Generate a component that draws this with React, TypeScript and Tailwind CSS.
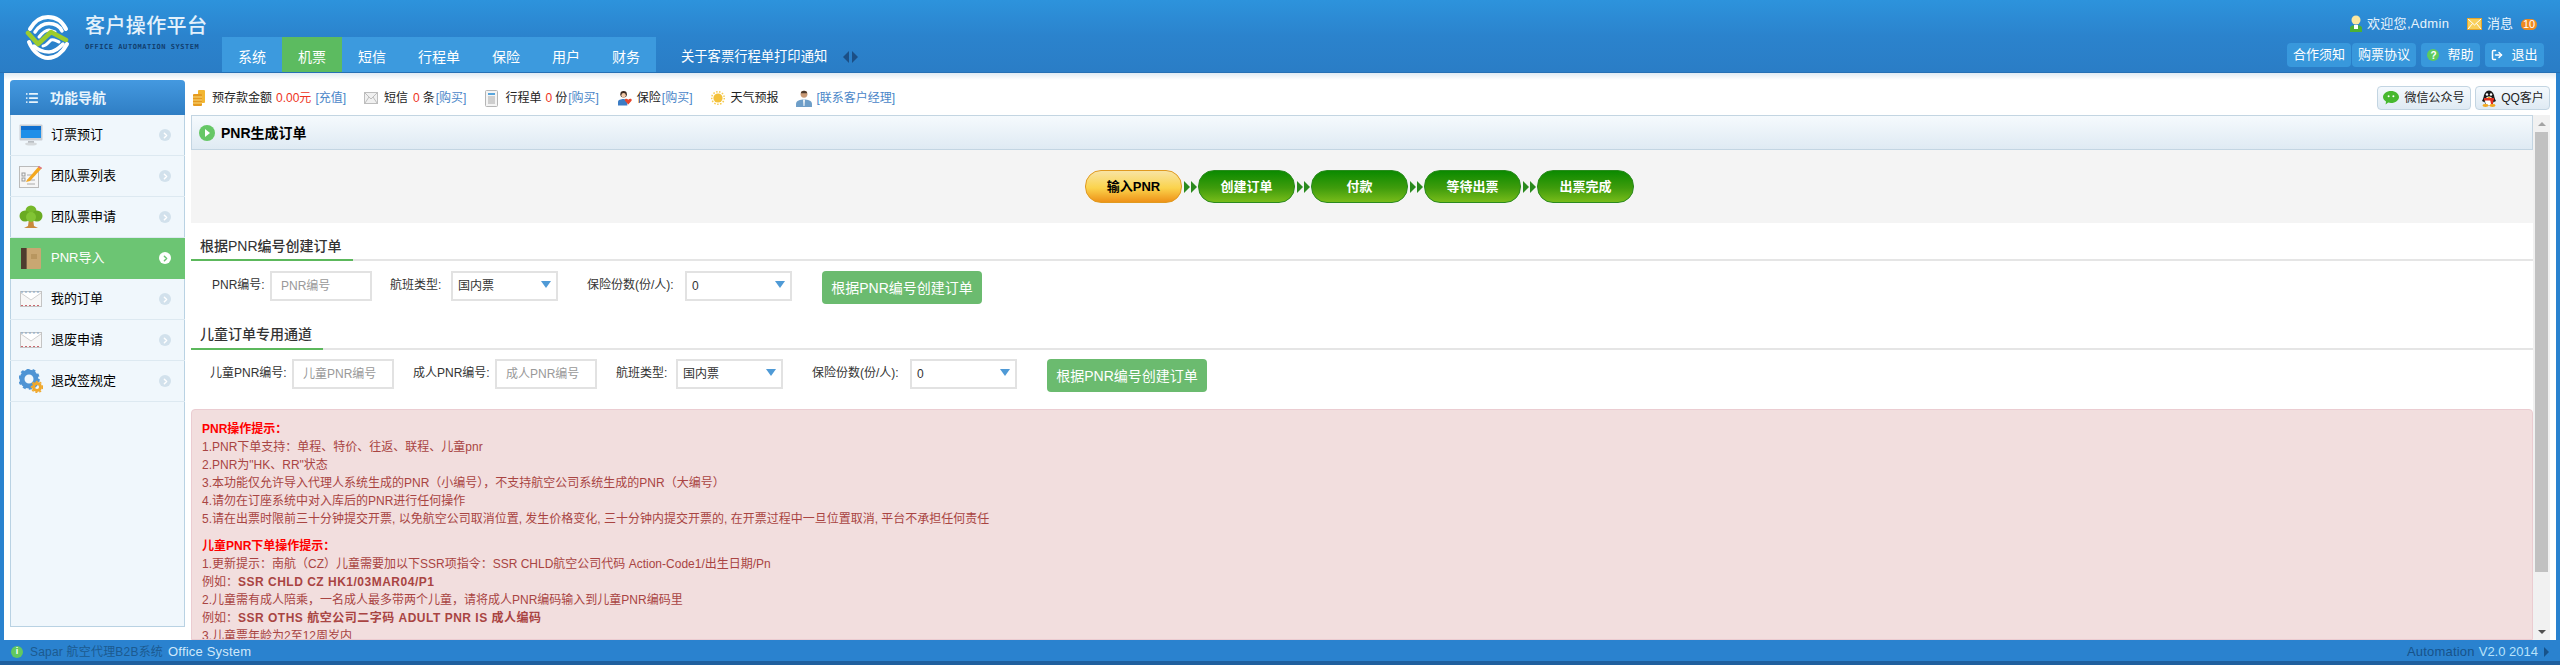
import { ChevronRight, List, LogOut } from "lucide-react"

const tabs = ["系统", "机票", "短信", "行程单", "保险", "用户", "财务"]

function Logo() {
  return (
    <svg width="45" height="45" viewBox="0 0 45 45" fill="none" strokeLinecap="round">
      <path d="M5 14C10 5 17 2 23 2C30 2 37 6 41 14" stroke="#fff" strokeWidth="4" />
      <path d="M10 17C14 11 19 8.500 24 8.500C29 8.500 34 10 37 16" stroke="#fff" strokeWidth="3.500" />
      <path d="M14 22C18 17 21 15 24 15L30 17" stroke="#fff" strokeWidth="3" />
      <path d="M3 18L13 29L26 17L41 25" stroke="#9ccc2c" strokeWidth="4.500" strokeLinejoin="round" />
      <path d="M4 27C8 37 16 43 23 43C31 43 38 37 42 29" stroke="#fff" strokeWidth="4" />
      <path d="M9 31C14 36 19 37 24 37C30 37 34 33 38 29" stroke="#fff" strokeWidth="3.500" />
      <path d="M18 31C21 31 23 28 26 25C29 24 31 26 34 27" stroke="#fff" strokeWidth="3" />
    </svg>
  )
}

function PersonIcon() {
  return (
    <svg width="14" height="18" viewBox="0 0 14 18">
      <circle cx="7" cy="5" r="4.500" fill="#fbe7a0" />
      <path d="M1 17V13C1 11 4 10 7 10C10 10 13 11 13 13V17Z" fill="#4cb034" />
      <rect x="5" y="10" width="4" height="4" fill="#fff" />
    </svg>
  )
}

function MailIcon() {
  return (
    <svg width="15" height="12" viewBox="0 0 15 12" className="shrink-0">
      <rect x="0.500" y="0.500" width="14" height="11" fill="#f8cf5a" stroke="#e5a52c" />
      <path d="M1 1L7.500 7L14 1M1 11L5.500 5.500M14 11L9.500 5.500" fill="none" stroke="#fff" />
    </svg>
  )
}

function HeaderButton({ children, wide }: { children: React.ReactNode; wide?: boolean }) {
  return (
    <div
      className={`flex h-6 items-center justify-center gap-2 rounded-sm bg-[#3898dc] text-[13px] whitespace-nowrap text-white ${
        wide ? "w-16" : "w-[59px]"
      }`}
    >
      {children}
    </div>
  )
}

function Header() {
  return (
    <header className="flex h-[73px] shrink-0 border-b border-[#2570b5] bg-[linear-gradient(180deg,#2d93dc_0%,#2b83cd_50%,#2a7dc6_100%)]">
      <div className="flex w-[222px] shrink-0 pt-[15px] pl-[25px]">
        <Logo />
        <div className="ml-[15px] -mt-[10px] pt-[8px]">
          <div className="text-[20px] leading-[26px] font-medium tracking-[0.4px] text-[#e3f1fb]">客户操作平台</div>
          <div className="mt-[3px] font-['DejaVu_Sans_Mono',monospace] text-[7px] leading-[10px] font-bold tracking-[0.55px] whitespace-nowrap text-[#123e6e]">
            OFFICE AUTOMATION SYSTEM
          </div>
        </div>
      </div>
      <div className="flex flex-1 items-end">
        <nav className="flex h-[35px] bg-[#3c9ade]">
          {tabs.map((tab) => (
            <div
              key={tab}
              className={`flex items-center px-4 pt-[4px] text-sm text-white ${tab === "机票" ? "bg-[#5cbb60]" : ""}`}
            >
              {tab}
            </div>
          ))}
        </nav>
        <div className="flex h-[35px] items-center pt-[4px] pl-[25px] text-[13.3px] text-white">
          关于客票行程单打印通知
          <span className="ml-[16px] h-0 w-0 border-y-[6px] border-r-[6px] border-y-transparent border-r-[#1b4f86]" />
          <span className="ml-[3px] h-0 w-0 border-y-[6px] border-l-[6px] border-y-transparent border-l-[#1b4f86]" />
        </div>
      </div>
      <div className="flex w-[273px] shrink-0 flex-col pt-[15px] pr-[16px]">
        <div className="flex h-[18px] items-center text-[13px] whitespace-nowrap text-[#e8f4fc]">
          <span className="ml-[62px]">
            <PersonIcon />
          </span>
          <span className="ml-[4px] w-[100px] tracking-[0.3px]">欢迎您,Admin</span>
          <MailIcon />
          <span className="ml-[5px]">消息</span>
          <span className="ml-[8px] flex h-[11px] w-[16px] items-center justify-center rounded-full bg-[#ef8a1f] text-[11px] text-[#fff]">
            10
          </span>
        </div>
        <div className="mt-[10px] flex justify-end">
          <div className="flex gap-[1px]">
            <HeaderButton wide>合作须知</HeaderButton>
            <HeaderButton wide>购票协议</HeaderButton>
          </div>
          <div className="ml-[5px]">
            <HeaderButton>
              <span className="flex h-3 w-3 items-center justify-center rounded-full bg-[#5ecb5e] text-[10px] font-bold">
                ?
              </span>
              帮助
            </HeaderButton>
          </div>
          <div className="ml-[5px]">
            <HeaderButton>
              <LogOut className="h-3 w-3" strokeWidth={3} />
              退出
            </HeaderButton>
          </div>
        </div>
      </div>
    </header>
  )
}

const sideItems = [
  { label: "订票预订", icon: <MonitorIcon /> },
  { label: "团队票列表", icon: <ChecklistIcon /> },
  { label: "团队票申请", icon: <TreeIcon /> },
  { label: "PNR导入", icon: <BookIcon />, active: true },
  { label: "我的订单", icon: <LetterIcon /> },
  { label: "退废申请", icon: <LetterIcon /> },
  { label: "退改签规定", icon: <GearsIcon /> },
]

function MonitorIcon() {
  return (
    <svg width="24" height="22" viewBox="0 0 24 22">
      <rect x="0.500" y="0.500" width="23" height="16" rx="1" fill="#c9ced3" />
      <rect x="2" y="2" width="20" height="12" fill="#1e8fe8" />
      <rect x="2" y="2" width="20" height="4" fill="#0f6fcf" />
      <rect x="9" y="17" width="6" height="2" fill="#b9bec3" />
      <ellipse cx="12" cy="20" rx="6" ry="1.600" fill="#d5d9dc" />
    </svg>
  )
}

function ChecklistIcon() {
  return (
    <svg width="24" height="24" viewBox="0 0 24 24">
      <rect x="0.500" y="2.500" width="19" height="21" fill="#f6f6f6" stroke="#bbb" />
      <rect x="3" y="9" width="3" height="3" fill="none" stroke="#999" />
      <rect x="3" y="14" width="3" height="3" fill="none" stroke="#999" />
      <path d="M8 11H16M8 16H16M8 20H16" stroke="#aaa" />
      <path d="M8 16L20 2L23 4L11 17L7 18Z" fill="#f3a71e" />
      <path d="M20 2L23 4L22 5L19 3Z" fill="#d86fa0" />
    </svg>
  )
}

function TreeIcon() {
  return (
    <svg width="24" height="24" viewBox="0 0 24 24">
      <path d="M10 14H14L15 21L19 23H5L9 21Z" fill="#c98a3c" />
      <circle cx="12" cy="6" r="5.500" fill="#76b82a" />
      <circle cx="6" cy="11" r="5.500" fill="#6aab22" />
      <circle cx="18" cy="11" r="5.500" fill="#6aab22" />
      <circle cx="12" cy="12" r="5" fill="#82c434" />
    </svg>
  )
}

function BookIcon() {
  return (
    <svg width="20" height="21" viewBox="0 0 20 21">
      <rect x="0" y="0" width="20" height="21" rx="1" fill="#c9a772" />
      <rect x="0" y="0" width="5" height="21" fill="#4e3c2e" />
      <rect x="5" y="0" width="1" height="21" fill="#7a6248" />
      <rect x="10" y="6" width="6" height="5" fill="#b8965f" />
    </svg>
  )
}

function LetterIcon() {
  return (
    <svg width="22" height="16" viewBox="0 0 22 16">
      <rect x="0.500" y="0.500" width="21" height="15" fill="#f7f7f7" stroke="#c4c4c4" />
      <path d="M1 2L11 9L21 2" fill="#fff" stroke="#cfcfcf" />
      <path d="M1 14.500H21" stroke="#c9686e" strokeDasharray="2 2" />
      <path d="M1 1H21" stroke="#7ea4c8" strokeDasharray="2 2" />
    </svg>
  )
}

function GearsIcon() {
  return (
    <svg width="24" height="24" viewBox="0 0 24 24">
      <circle cx="10" cy="10" r="7" fill="none" stroke="#4f94d4" strokeWidth="5" />
      <circle cx="10" cy="10" r="9.500" fill="none" stroke="#4f94d4" strokeWidth="2.500" strokeDasharray="3 3" />
      <circle cx="18" cy="18" r="3.500" fill="none" stroke="#f0a82c" strokeWidth="3" />
      <circle cx="18" cy="18" r="5.500" fill="none" stroke="#f0a82c" strokeWidth="1.500" strokeDasharray="2 2" />
    </svg>
  )
}

function Sidebar() {
  return (
    <aside className="ml-[6px] mt-[7px] flex h-[547px] w-[175px] shrink-0 flex-col rounded-t-sm border-x border-b border-[#b9d2e3] bg-[#f0f7fc]">
      <div className="-mx-px flex h-[35px] items-center rounded-t-sm bg-[linear-gradient(180deg,#4499e0,#2f7ec4)] pl-[15px] text-sm font-bold text-[#e8f4fc]">
        <List className="h-[14px] w-[14px]" strokeWidth={3} />
        <span className="ml-[11px]">功能导航</span>
      </div>
      {sideItems.map((item) => (
        <div
          key={item.label}
          className={`-mx-px flex h-[41px] items-center border-b pr-[14px] text-[13px] ${
            item.active ? "border-[#6cc573] bg-[#6cc573] text-white" : "border-[#dde9f1] text-black"
          }`}
        >
          <span className="flex w-[41px] shrink-0 justify-center">{item.icon}</span>
          <span className="flex-1">{item.label}</span>
          <span
            className={`flex h-3 w-3 items-center justify-center rounded-full ${
              item.active ? "bg-white text-[#6cc573]" : "bg-[#d2e1ec] text-white"
            }`}
          >
            <ChevronRight className="h-[9px] w-[9px]" strokeWidth={4} />
          </span>
        </div>
      ))}
    </aside>
  )
}

function CoinIcon() {
  return (
    <svg width="12" height="16" viewBox="0 0 12 16">
      <rect x="5" y="0" width="7" height="13" rx="1" fill="#f2b632" />
      <rect x="0" y="4" width="9" height="12" rx="1" fill="#e59a1f" />
      <path d="M0 7H9M0 10H9M0 13H9" stroke="#fbdc7a" />
    </svg>
  )
}

function SmallMail() {
  return (
    <svg width="14" height="12" viewBox="0 0 14 12">
      <rect x="0.500" y="0.500" width="13" height="11" fill="#f0f0f0" stroke="#bdbdbd" />
      <path d="M1 1L7 7L13 1M1 11L5 5M13 11L9 5" fill="none" stroke="#bdbdbd" />
    </svg>
  )
}

function DocIcon() {
  return (
    <svg width="13" height="17" viewBox="0 0 13 17">
      <rect x="0.500" y="0.500" width="12" height="16" rx="1" fill="#f4f4f4" stroke="#b5b5b5" />
      <rect x="3" y="3" width="7" height="2" fill="#58a5dc" />
      <path d="M3 7H10M3 9H10M3 11H10M3 13H10" stroke="#a8a8a8" />
    </svg>
  )
}

function InsureIcon() {
  return (
    <svg width="14" height="16" viewBox="0 0 15 16">
      <circle cx="6" cy="4" r="3.500" fill="#3c2a20" />
      <circle cx="6" cy="5" r="2.400" fill="#f2c9a8" />
      <path d="M0 16V12C0 10 3 9 6 9C8 9 10 10 10 12V16Z" fill="#3c7cc4" />
      <path d="M11 15L7.500 11C6.500 9 9.500 8 11 10C12.500 8 15.500 9 14.500 11Z" fill="#e8452c" />
    </svg>
  )
}

function SunIcon() {
  return (
    <svg width="14" height="14" viewBox="0 0 14 14">
      <circle cx="7" cy="7" r="6.300" fill="none" stroke="#f6cc52" strokeWidth="1.500" strokeDasharray="1.500 1.500" />
      <circle cx="7" cy="7" r="4.600" fill="#f3c13a" />
    </svg>
  )
}

function ManagerIcon() {
  return (
    <svg width="16" height="17" viewBox="0 0 15 16">
      <circle cx="7.500" cy="4" r="3.200" fill="#c99a76" />
      <path d="M4.500 3C5 0 10 0 10.500 3Z" fill="#4c3a2c" />
      <path d="M0 16V13C0 10 4 9 7.500 9C11 9 15 10 15 13V16Z" fill="#6e9ec8" />
      <path d="M6.500 9H8.500L8 15H7Z" fill="#e8f0f6" />
    </svg>
  )
}

function WechatIcon() {
  return (
    <svg width="16" height="14" viewBox="0 0 16 14">
      <path d="M8 0C12.400 0 16 2.700 16 6C16 9.300 12.400 12 8 12C7 12 6 11.900 5.200 11.600L2.600 13.600L3 10.500C1.200 9.400 0 7.800 0 6C0 2.700 3.600 0 8 0Z" fill="#46b82e" />
      <circle cx="5.600" cy="5.200" r="1" fill="#fff" />
      <circle cx="10.400" cy="5.200" r="1" fill="#fff" />
    </svg>
  )
}

function PenguinIcon() {
  return (
    <svg width="16" height="17" viewBox="0 0 16 17">
      <ellipse cx="8" cy="8" rx="5.500" ry="7.500" fill="#1a1a1a" />
      <ellipse cx="8" cy="11" rx="4" ry="4.500" fill="#fff" />
      <path d="M1 11L3 7V12ZM15 11L13 7V12Z" fill="#1a1a1a" />
      <rect x="3" y="8" width="10" height="2.500" fill="#e03020" />
      <path d="M9 9H12V14H10Z" fill="#e03020" />
      <circle cx="6" cy="4.500" r="1.200" fill="#fff" />
      <circle cx="10" cy="4.500" r="1.200" fill="#fff" />
      <path d="M6 7H10L8 8.400Z" fill="#f3b01e" />
      <ellipse cx="4.500" cy="15.500" rx="3" ry="1.400" fill="#f3a81e" />
      <ellipse cx="11.500" cy="15.500" rx="3" ry="1.400" fill="#f3a81e" />
    </svg>
  )
}

function Buy() {
  return <span className="ml-[1px] text-[#4a86c8]">[购买]</span>
}

function InfoBar() {
  return (
    <div className="flex h-[35px] shrink-0 items-center pt-[1px] pl-[2px] text-xs whitespace-nowrap text-[#222]">
      <CoinIcon />
      <span className="ml-[7px]">预存款金额</span>
      <span className="ml-[4px] text-[#ee3322]">0.00元</span>
      <span className="ml-[4px] text-[#4a86c8]">[充值]</span>
      <span className="ml-[18px]">
        <SmallMail />
      </span>
      <span className="ml-[6px]">短信</span>
      <span className="ml-[5px] text-[#ee3322]">0</span>
      <span className="ml-[3px]">条</span>
      <Buy />
      <span className="ml-[19px]">
        <DocIcon />
      </span>
      <span className="ml-[7px]">行程单</span>
      <span className="ml-[4px] text-[#ee3322]">0</span>
      <span className="ml-[3px]">份</span>
      <Buy />
      <span className="ml-[19px]">
        <InsureIcon />
      </span>
      <span className="ml-[5px]">保险</span>
      <Buy />
      <span className="ml-[18px]">
        <SunIcon />
      </span>
      <span className="ml-[6px]">天气预报</span>
      <span className="ml-[17px]">
        <ManagerIcon />
      </span>
      <span className="ml-[5px] text-[#4a86c8]">[联系客户经理]</span>
      <div className="ml-auto flex gap-[4px]">
        <div className="flex h-6 w-[94px] items-center justify-center gap-[5px] rounded-sm border border-[#c3d5e2] bg-[linear-gradient(180deg,#f4f9fd,#dfeaf3)]">
          <WechatIcon />
          微信公众号
        </div>
        <div className="flex h-6 w-[75px] items-center justify-center gap-[4px] rounded-sm border border-[#c3d5e2] bg-[linear-gradient(180deg,#f4f9fd,#dfeaf3)]">
          <PenguinIcon />
          QQ客户
        </div>
      </div>
    </div>
  )
}

const steps = ["输入PNR", "创建订单", "付款", "等待出票", "出票完成"]

function Steps() {
  return (
    <div className="flex h-[73px] shrink-0 items-center justify-center bg-[#f4f4f4] pr-[5px]">
      {steps.map((step, i) => (
        <div key={step} className="flex items-center">
          {i > 0 && (
            <span className="flex w-[16px] justify-center">
              <span className="h-0 w-0 border-y-[6px] border-l-[6px] border-y-transparent border-l-[#2a8a1e]" />
              <span className="ml-px h-0 w-0 border-y-[6px] border-l-[6px] border-y-transparent border-l-[#2a8a1e]" />
            </span>
          )}
          <div
            className={`flex h-[33px] w-[97px] items-center justify-center rounded-[16px] border text-[13px] font-bold ${
              i === 0
                ? "border-[#e09a20] bg-[linear-gradient(180deg,#f8e4a4,#fbd34c_55%,#ee9218)] text-black"
                : "border-[#2a8a1e] bg-[linear-gradient(180deg,#0b8a00,#3f9c0c_55%,#78bc1a)] text-white"
            }`}
          >
            {step}
          </div>
        </div>
      ))}
    </div>
  )
}

function SectionTitle({ children, green }: { children: React.ReactNode; green: string }) {
  return (
    <div className="border-b-2 border-[#e5e5e5]">
      <div className={`-mb-[2px] border-b-2 border-[#5cb85c] pl-[9px] text-sm leading-[20px] font-medium whitespace-nowrap text-[#333] ${green}`}>
        {children}
      </div>
    </div>
  )
}

function FieldLabel({ children, className }: { children: React.ReactNode; className: string }) {
  return <label className={`shrink-0 pt-[6px] text-xs whitespace-nowrap text-[#333] ${className}`}>{children}</label>
}

function TextBox({ placeholder, className }: { placeholder: string; className: string }) {
  return (
    <input
      readOnly
      placeholder={placeholder}
      className={`h-[30px] w-[102px] shrink-0 border-2 border-[#e2e2e2] px-[9px] text-xs placeholder:text-[#999] ${className}`}
    />
  )
}

function SelectBox({ value, className }: { value: string; className: string }) {
  return (
    <div className={`flex h-[30px] w-[107px] shrink-0 items-center justify-between border-2 border-[#e2e2e2] bg-white pl-[5px] pr-[5px] text-xs text-[#333] ${className}`}>
      {value}
      <span className="-mt-[3px] h-0 w-0 border-x-[5px] border-t-[7px] border-x-transparent border-t-[#4f9ad6]" />
    </div>
  )
}

function CreateButton({ className }: { className: string }) {
  return (
    <button className={`h-[33px] w-[160px] shrink-0 rounded-sm bg-[#6bbb6f] text-sm text-white ${className}`}>
      根据PNR编号创建订单
    </button>
  )
}

const tips = [
  "1.PNR下单支持：单程、特价、往返、联程、儿童pnr",
  '2.PNR为"HK、RR"状态',
  "3.本功能仅允许导入代理人系统生成的PNR（小编号），不支持航空公司系统生成的PNR（大编号）",
  "4.请勿在订座系统中对入库后的PNR进行任何操作",
  "5.请在出票时限前三十分钟提交开票, 以免航空公司取消位置, 发生价格变化, 三十分钟内提交开票的, 在开票过程中一旦位置取消, 平台不承担任何责任",
]

function Notice() {
  return (
    <div className="mt-[17px] min-h-0 flex-1 overflow-hidden rounded-t-sm border border-[#ebccd1] bg-[#f2dede] pt-[10px] pl-[10px] text-xs leading-[18px] whitespace-nowrap text-[#a94442]">
      <div className="font-bold text-[#ff0000]">PNR操作提示：</div>
      {tips.map((tip) => (
        <div key={tip}>{tip}</div>
      ))}
      <div className="mt-[9px] font-bold text-[#ff0000]">儿童PNR下单操作提示：</div>
      <div>1.更新提示：南航（CZ）儿童需要加以下SSR项指令：SSR CHLD航空公司代码 Action-Code1/出生日期/Pn</div>
      <div>
        例如：<b className="tracking-[0.5px]">SSR CHLD CZ HK1/03MAR04/P1</b>
      </div>
      <div>2.儿童需有成人陪乘，一名成人最多带两个儿童，请将成人PNR编码输入到儿童PNR编码里</div>
      <div>
        例如：<b className="tracking-[0.5px]">SSR OTHS 航空公司二字码 ADULT PNR IS 成人编码</b>
      </div>
      <div>3.儿童票年龄为2至12周岁内</div>
    </div>
  )
}

function Scrollbar() {
  return (
    <div className="flex w-[17px] shrink-0 flex-col items-center bg-[#f1f1f1]">
      <div className="flex h-[17px] w-full items-center justify-center">
        <span className="h-0 w-0 border-x-[4px] border-b-[4px] border-x-transparent border-b-[#a3a3a3]" />
      </div>
      <div className="h-[440px] w-[13px] bg-[#c1c1c1]" />
      <div className="mt-auto flex h-[17px] w-full items-center justify-center">
        <span className="h-0 w-0 border-x-[4px] border-t-[4px] border-x-transparent border-t-[#505050]" />
      </div>
    </div>
  )
}

function Content() {
  return (
    <div className="flex min-w-0 flex-1 flex-col overflow-hidden">
      <div className="flex h-[35px] shrink-0 items-center border border-[#c3d5e2] bg-[linear-gradient(180deg,#f5fafd,#dfeaf3)] pl-[7px] text-sm font-bold text-black">
        <span className="flex h-4 w-4 items-center justify-center rounded-full bg-[#66c766]">
          <span className="ml-px h-0 w-0 border-y-[4px] border-l-[5px] border-y-transparent border-l-white" />
        </span>
        <span className="ml-[6px]">PNR生成订单</span>
      </div>
      <Steps />
      <div className="mt-[13px]">
        <SectionTitle green="w-[162px] pb-[3px]">根据PNR编号创建订单</SectionTitle>
      </div>
      <div className="mt-[10px] flex h-[33px] items-start">
        <FieldLabel className="ml-[21px] w-[51px]">PNR编号:</FieldLabel>
        <TextBox placeholder="PNR编号" className="ml-[7px]" />
        <FieldLabel className="ml-[18px] w-[50px]">航班类型:</FieldLabel>
        <SelectBox value="国内票" className="ml-[11px]" />
        <FieldLabel className="ml-[29px] w-[92px]">保险份数(份/人):</FieldLabel>
        <SelectBox value="0" className="ml-[6px]" />
        <CreateButton className="ml-[30px]" />
      </div>
      <div className="mt-[20px]">
        <SectionTitle green="w-[132px] pb-[4px]">儿童订单专用通道</SectionTitle>
      </div>
      <div className="mt-[9px] flex h-[33px] items-start">
        <FieldLabel className="ml-[19px] w-[75px]">儿童PNR编号:</FieldLabel>
        <TextBox placeholder="儿童PNR编号" className="ml-[7px]" />
        <FieldLabel className="ml-[19px] w-[74px]">成人PNR编号:</FieldLabel>
        <TextBox placeholder="成人PNR编号" className="ml-[8px]" />
        <FieldLabel className="ml-[19px] w-[51px]">航班类型:</FieldLabel>
        <SelectBox value="国内票" className="ml-[9px]" />
        <FieldLabel className="ml-[29px] w-[92px]">保险份数(份/人):</FieldLabel>
        <SelectBox value="0" className="ml-[6px]" />
        <CreateButton className="ml-[30px]" />
      </div>
      <Notice />
    </div>
  )
}

function Footer() {
  return (
    <footer className="flex h-[25px] shrink-0 items-center border-b-[4px] border-[#1f5f9e] bg-[#2a82cf] pt-[2px] text-[13px] whitespace-nowrap text-[#cfe8fa]">
      <span className="ml-[11px] flex h-3 w-3 items-center justify-center rounded-full bg-[#62c95f] text-[9px] font-bold text-white">
        i
      </span>
      <span className="ml-[7px] w-[138px] text-xs tracking-[0.2px] text-[#1c5a90]">Sapar 航空代理B2B系统</span>
      <span className="tracking-[0.2px]">Office System</span>
      <span className="ml-auto tracking-[0.2px] text-[#17528a]">Automation</span>
      <span className="ml-[4px] text-[#b8e2fb]">V2.0 2014</span>
      <span className="mr-[11px] ml-[6px] h-0 w-0 border-y-[5px] border-l-[5px] border-y-transparent border-l-[#17528a]" />
    </footer>
  )
}

export default function App() {
  return (
    <div className="flex h-[665px] w-full flex-col overflow-hidden font-['Liberation_Sans','Noto_Sans_CJK_SC',sans-serif]">
      <Header />
      <div className="flex min-h-0 flex-1 border-x-4 border-[#2a82cf] bg-[linear-gradient(180deg,#dfeaf3_0px,#ffffff_7px)]">
        <Sidebar />
        <div className="ml-[6px] flex min-w-0 flex-1 flex-col pt-[7px] pr-[6px]">
          <InfoBar />
          <div className="flex min-h-0 flex-1">
            <Content />
            <Scrollbar />
          </div>
        </div>
      </div>
      <Footer />
    </div>
  )
}
